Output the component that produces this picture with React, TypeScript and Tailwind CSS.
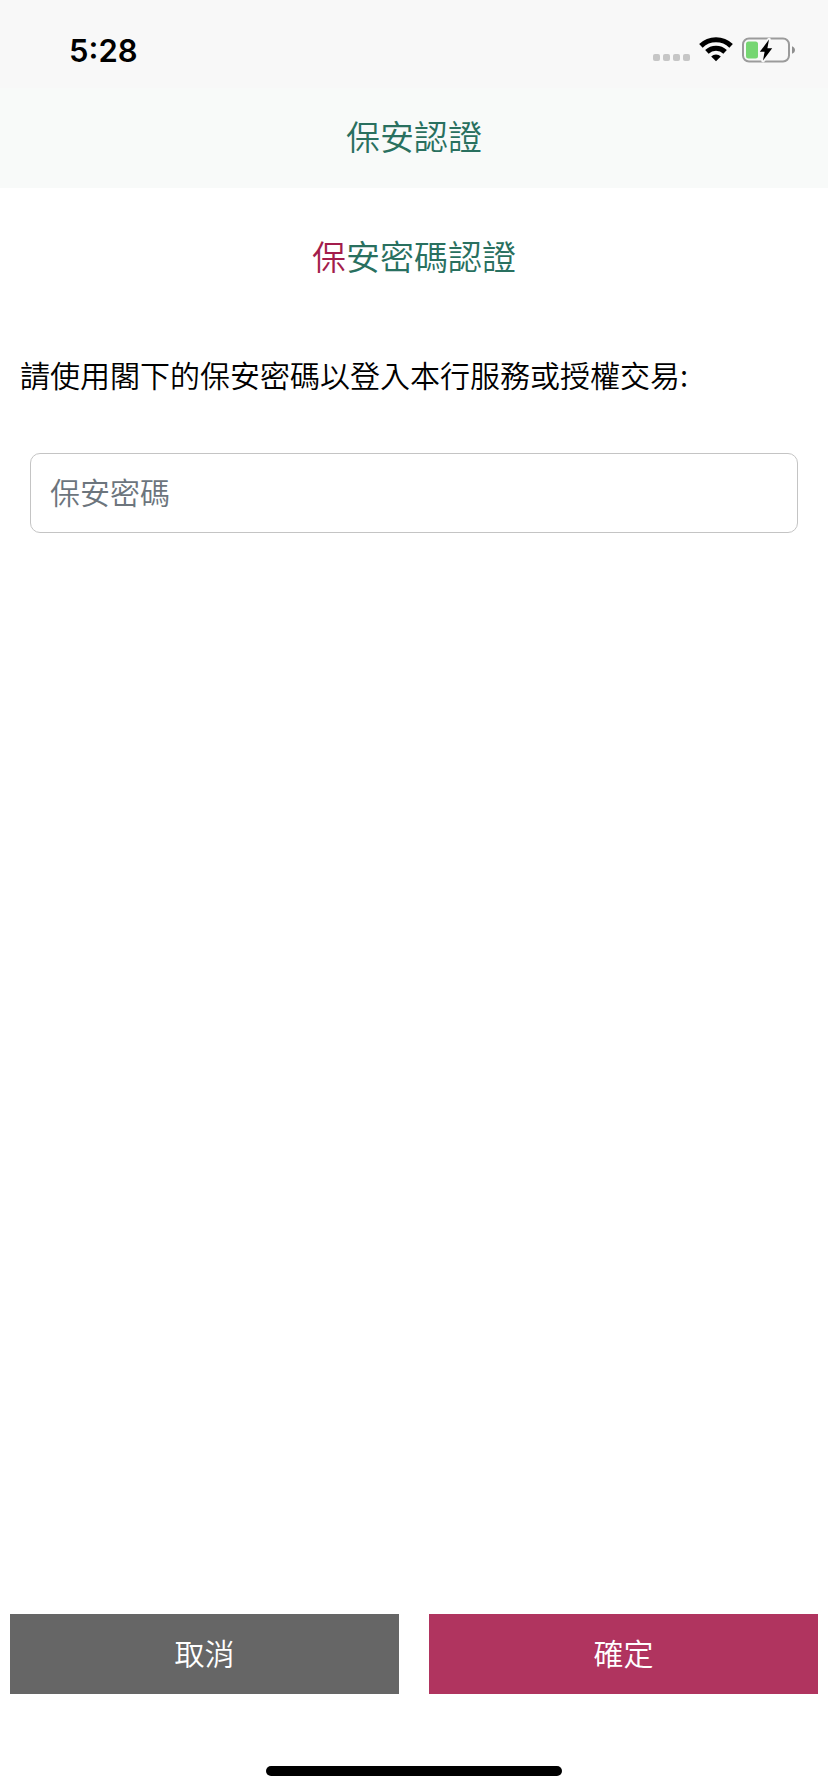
import { useState } from 'react';

function SignalDots() {
  return (
    <svg width="37" height="26" viewBox="0 0 37 26" fill="#c6c6c6" aria-hidden="true">
      <rect x="0" y="17" width="7" height="7" rx="2" />
      <rect x="10" y="17" width="7" height="7" rx="2" />
      <rect x="20" y="17" width="7" height="7" rx="2" />
      <rect x="30" y="17" width="7" height="7" rx="2" />
    </svg>
  );
}

function WifiIcon() {
  return (
    <svg width="34" height="26" viewBox="0 0 34 26" aria-hidden="true">
      <g fill="none" stroke="#000" strokeWidth="5">
        <path d="M1.9 8.9 A21.6 21.6 0 0 1 32.1 8.9" />
        <path d="M7.9 14.9 A13.1 13.1 0 0 1 26.1 14.9" />
      </g>
      <path d="M17 24.2 L12.2 19.4 A6.8 6.8 0 0 1 21.8 19.4 Z" fill="#000" />
    </svg>
  );
}

function BatteryIcon() {
  return (
    <svg width="54" height="26" viewBox="0 0 54 26" aria-hidden="true">
      <rect x="1" y="1.5" width="46" height="23" rx="6" fill="none" stroke="#9b9b9b" strokeWidth="2" />
      <rect x="4" y="4.5" width="12" height="17" rx="2.5" fill="#76d672" />
      <path d="M50 9.2 C52.2 10 53 11.5 53 13 C53 14.5 52.2 16 50 16.8 Z" fill="#8f8f8f" />
      <path
        d="M27 2.6 L17.8 14.8 H22.6 L21 23.6 L30.2 11.2 H25.4 Z"
        fill="#000"
        stroke="#f8f8f8"
        strokeWidth="3.6"
        strokeLinejoin="round"
        paintOrder="stroke"
      />
    </svg>
  );
}

export default function App() {
  const [password, setPassword] = useState('');

  return (
    <div className="flex min-h-screen flex-col bg-white font-['Noto_Sans_CJK_TC',sans-serif] font-[350] text-black">
      {/* Status bar */}
      <div className="flex h-[88px] items-center justify-between bg-[#f8f8f8] pt-3 pr-8 pl-[69px]">
        <span className="font-[Inter,sans-serif] text-[31px] leading-none font-semibold">5:28</span>
        <div className="flex items-center gap-[9px]">
          <SignalDots />
          <WifiIcon />
          <BatteryIcon />
        </div>
      </div>

      <header className="flex h-[100px] items-center justify-center bg-[#f8faf9] pb-1">
        <h1 className="text-[34px] leading-[48px] font-[350] text-[#29705f]">保安認證</h1>
      </header>

      <form className="flex flex-1 flex-col" onSubmit={(e) => e.preventDefault()}>
        <h2 className="mt-11 text-center text-[34px] leading-[48px] font-[350] text-[#29705f]">
          <span className="text-[#a31c4b]">保</span>安密碼認證
        </h2>

        <label htmlFor="password" className="mt-[70px] px-5 text-[30px] leading-[48px]">
          請使用閣下的保安密碼以登入本行服務或授權交易:
        </label>

        <div className="mt-[55px] px-[30px]">
          <input
            id="password"
            type="password"
            placeholder="保安密碼"
            value={password}
            onChange={(e) => setPassword(e.target.value)}
            className="h-20 w-full rounded-[10px] border border-[#c4c4c4] px-[19px] pb-1 text-[30px] outline-none placeholder:text-[#6c757d]"
          />
        </div>

        <div className="mt-auto grid grid-cols-2 gap-[30px] px-2.5 text-[30px] text-white">
          <button type="button" className="h-20 bg-[#666666] pb-1">
            取消
          </button>
          <button type="submit" className="h-20 bg-[#b0345f] pb-1">
            確定
          </button>
        </div>
      </form>

      {/* Home indicator */}
      <div className="flex justify-center pt-[72px] pb-4">
        <div className="h-2.5 w-[296px] rounded-full bg-black" />
      </div>
    </div>
  );
}
